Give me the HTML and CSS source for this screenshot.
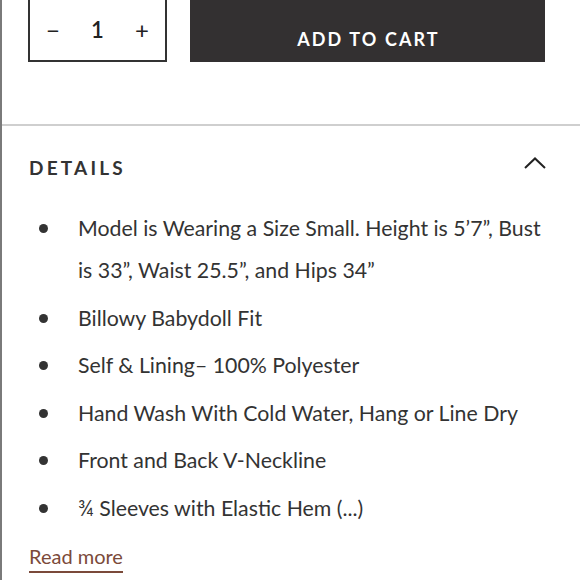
FILE: index.html
```html
<!DOCTYPE html>
<html>
<head>
<meta charset="utf-8">
<link rel="stylesheet" href="styles.css">
</head>
<body>
<div class="page">
  <div class="buy-row">
    <div class="qty">
      <span class="qty-btn">−</span>
      <span class="qty-val">1</span>
      <span class="qty-btn">+</span>
    </div>
    <button class="cart">ADD TO CART</button>
  </div>
  <section class="details">
    <div class="details-head">
      <h2 class="details-title">DETAILS</h2>
      <svg class="chevron" width="22" height="12" viewBox="0 0 22 12"><path d="M1 11 L11 1.5 L21 11" fill="none" stroke="#222" stroke-width="2"/></svg>
    </div>
    <ul class="list">
      <li>Model is Wearing a Size Small. Height is 5’7”, Bust is 33”, Waist 25.5”, and Hips 34”</li>
      <li>Billowy Babydoll Fit</li>
      <li>Self &amp; Lining– 100% Polyester</li>
      <li>Hand Wash With Cold Water, Hang or Line Dry</li>
      <li>Front and Back V-Neckline</li>
      <li>¾ Sleeves with Elastic Hem (...)</li>
    </ul>
    <a class="more" href="#">Read more</a>
  </section>
</div>
</body>
</html>
```
FILE: styles.css
```css
html, body {
  margin: 0;
  padding: 0;
  background: #fff;
}
body {
  font-family: Lato, "Open Sans", sans-serif;
  color: #333;
  width: 580px;
  height: 580px;
  overflow: hidden;
}
.page {
  border-left: 2px solid #7a7a7a;
  min-height: 600px;
  box-sizing: border-box;
}
.buy-row {
  display: flex;
  align-items: flex-start;
  padding-left: 26px;
  margin-top: -2px;
  height: 64px;
}
.qty {
  box-sizing: border-box;
  width: 139px;
  height: 64px;
  border: 2px solid #333;
  display: flex;
  align-items: center;
  justify-content: space-between;
  padding: 0 14px 2px 14px;
  font-size: 22px;
  color: #222;
}
.qty-btn {
  width: 18px;
  text-align: center;
  font-size: 24px;
}
.qty-val {
  font-weight: 600;
  font-size: 22px;
}
.cart {
  margin-left: 23px;
  margin-top: 2px;
  width: 355px;
  height: 62px;
  border: none;
  background: #333031;
  color: #fff;
  font-family: Lato, sans-serif;
  font-weight: 700;
  font-size: 18px;
  letter-spacing: 2.1px;
  padding: 16px 0 0 2px;
}
.details {
  margin-top: 62px;
  border-top: 2px solid #cfcfcf;
  padding: 27px 34px 0 27px;
}
.details-head {
  display: flex;
  align-items: center;
  justify-content: space-between;
  height: 28px;
}
.details-title {
  margin: 0;
  font-size: 19px;
  font-weight: 700;
  letter-spacing: 3.2px;
  color: #333;
  line-height: 28px;
  padding-top: 2px;
}
.chevron {
  margin-top: -8px;
  margin-right: 0;
}
.list {
  list-style: none;
  margin: 26px 0 0 0;
  padding: 0;
  font-size: 21.3px;
  line-height: 42px;
  color: #333;
}
.list li {
  display: flex;
  margin-bottom: 5.6px;
}
.list li::before {
  content: "";
  flex: none;
  width: 9px;
  height: 9px;
  border-radius: 50%;
  background: #333;
  margin: 17px 30px 0 10px;
}
.more {
  display: inline-block;
  margin-top: 8px;
  font-size: 20px;
  line-height: 27px;
  color: #7b4a3a;
  text-decoration: none;
  border-bottom: 2px solid #7b4a3a;
  padding-bottom: 1px;
}
```
